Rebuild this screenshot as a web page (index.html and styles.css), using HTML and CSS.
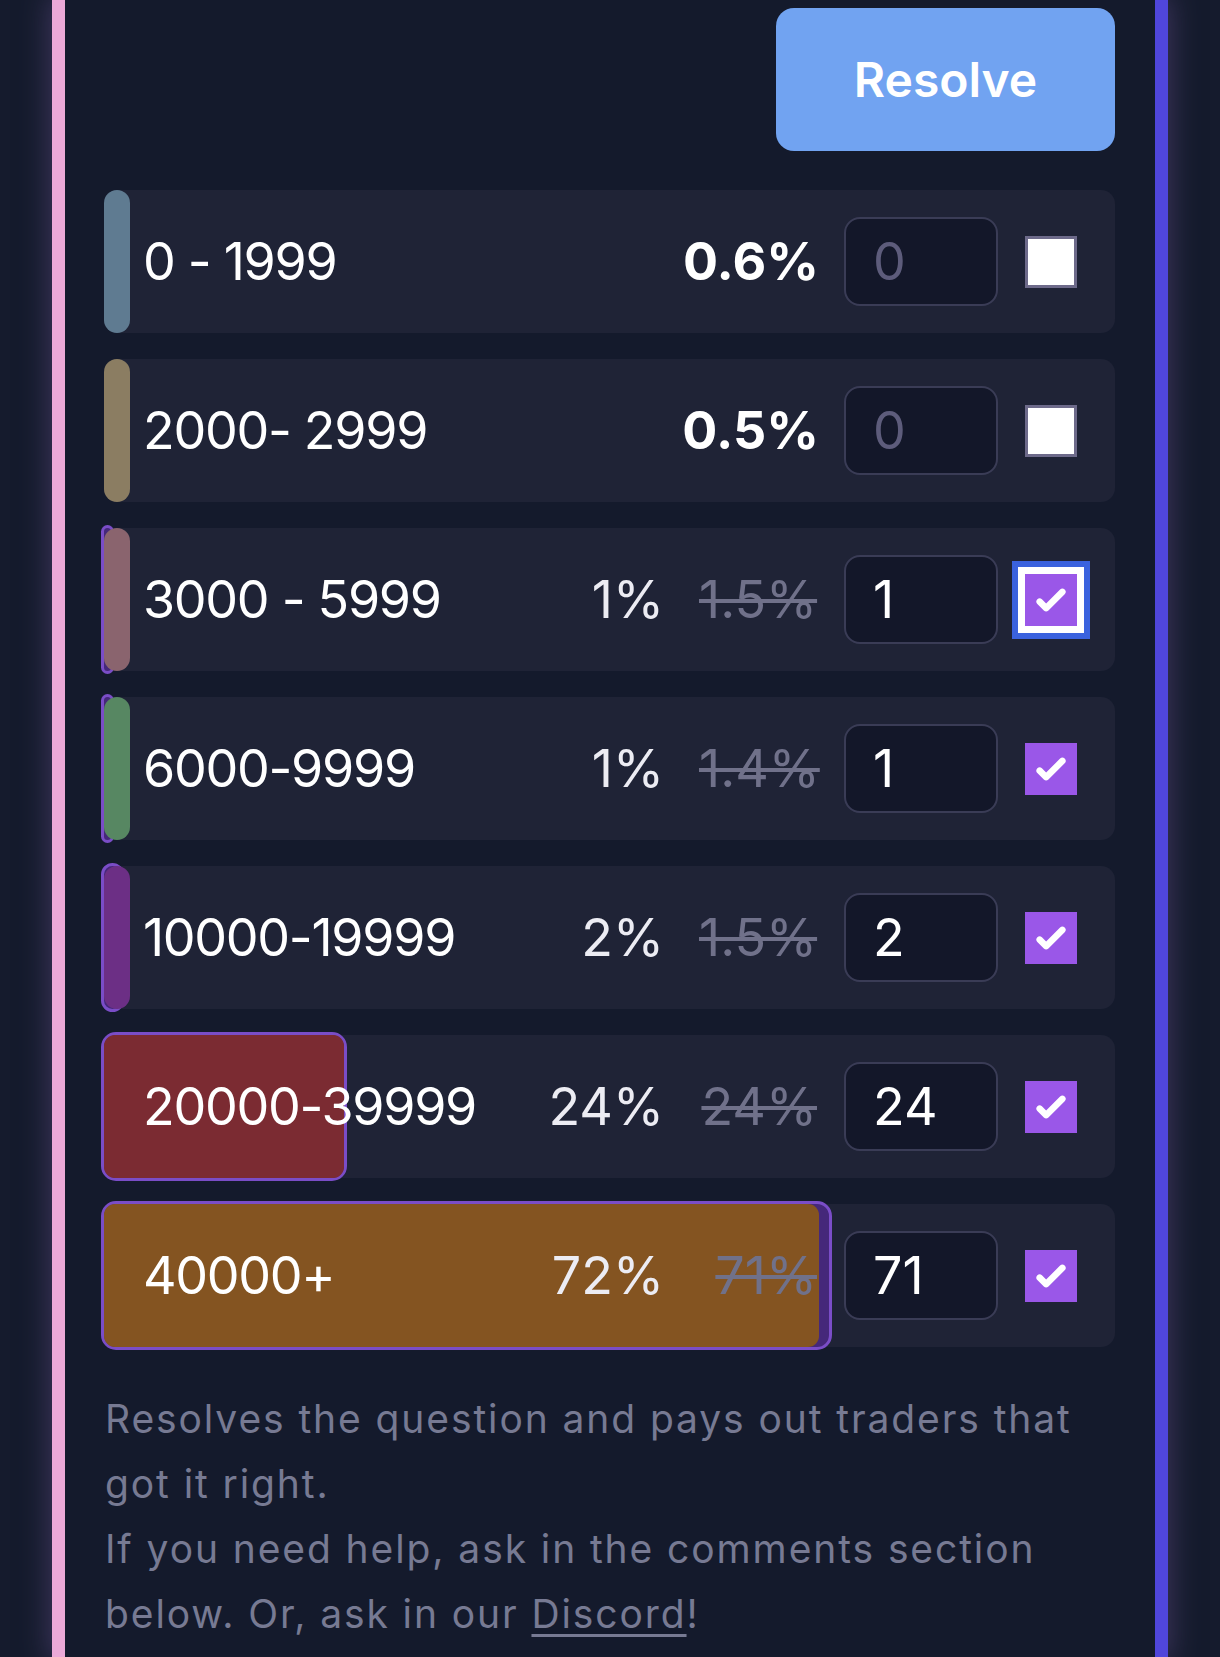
FILE: index.html
```html
<!DOCTYPE html>
<html lang="en">
<head>
<meta charset="utf-8">
<title>Resolve</title>
<link rel="stylesheet" href="styles.css">
</head>
<body>
<main class="panel">
  <div class="actions">
    <button class="resolve" type="button">Resolve</button>
  </div>

  <div class="answers">
    <div class="answer">
      <div class="fill c1" style="width:0.6%"></div>
      <span class="label">0 - 1999</span>
      <span class="probs"><span class="prob strong">0.6%</span></span>
      <input class="amount" type="text" placeholder="0">
      <span class="check"></span>
    </div>

    <div class="answer">
      <div class="fill c2" style="width:0.5%"></div>
      <span class="label">2000- 2999</span>
      <span class="probs"><span class="prob strong">0.5%</span></span>
      <input class="amount" type="text" placeholder="0">
      <span class="check"></span>
    </div>

    <div class="answer">
      <div class="ring" style="width:calc(1% + 3px)"></div>
      <div class="fill c3" style="width:calc(1.5% - 3px)"></div>
      <span class="label">3000 - 5999</span>
      <span class="probs"><span class="prob">1%</span><span class="old">1.5%</span></span>
      <input class="amount" type="text" value="1">
      <span class="check on focus"><svg viewBox="0 0 16 16"><path d="M12.207 4.793a1 1 0 010 1.414l-5 5a1 1 0 01-1.414 0l-2-2a1 1 0 011.414-1.414L6.5 9.086l4.293-4.293a1 1 0 011.414 0z"/></svg></span>
    </div>

    <div class="answer">
      <div class="ring" style="width:calc(1% + 3px)"></div>
      <div class="fill c4" style="width:calc(1.4% - 3px)"></div>
      <span class="label">6000-9999</span>
      <span class="probs"><span class="prob">1%</span><span class="old">1.4%</span></span>
      <input class="amount" type="text" value="1">
      <span class="check on"><svg viewBox="0 0 16 16"><path d="M12.207 4.793a1 1 0 010 1.414l-5 5a1 1 0 01-1.414 0l-2-2a1 1 0 011.414-1.414L6.5 9.086l4.293-4.293a1 1 0 011.414 0z"/></svg></span>
    </div>

    <div class="answer">
      <div class="ring" style="width:calc(2% + 3px)"></div>
      <div class="fill c5" style="width:calc(1.5% - 3px)"></div>
      <span class="label">10000-19999</span>
      <span class="probs"><span class="prob">2%</span><span class="old">1.5%</span></span>
      <input class="amount" type="text" value="2">
      <span class="check on"><svg viewBox="0 0 16 16"><path d="M12.207 4.793a1 1 0 010 1.414l-5 5a1 1 0 01-1.414 0l-2-2a1 1 0 011.414-1.414L6.5 9.086l4.293-4.293a1 1 0 011.414 0z"/></svg></span>
    </div>

    <div class="answer">
      <div class="ring" style="width:calc(24% + 3px)"></div>
      <div class="fill wide c6" style="width:calc(24% - 3px)"></div>
      <span class="label">20000-39999</span>
      <span class="probs"><span class="prob">24%</span><span class="old">24%</span></span>
      <input class="amount" type="text" value="24">
      <span class="check on"><svg viewBox="0 0 16 16"><path d="M12.207 4.793a1 1 0 010 1.414l-5 5a1 1 0 01-1.414 0l-2-2a1 1 0 011.414-1.414L6.5 9.086l4.293-4.293a1 1 0 011.414 0z"/></svg></span>
    </div>

    <div class="answer">
      <div class="ring" style="width:calc(72% + 3px)"></div>
      <div class="fill wide c7" style="width:calc(71% - 3px)"></div>
      <span class="label">40000+</span>
      <span class="probs"><span class="prob">72%</span><span class="old">71%</span></span>
      <input class="amount" type="text" value="71">
      <span class="check on"><svg viewBox="0 0 16 16"><path d="M12.207 4.793a1 1 0 010 1.414l-5 5a1 1 0 01-1.414 0l-2-2a1 1 0 011.414-1.414L6.5 9.086l4.293-4.293a1 1 0 011.414 0z"/></svg></span>
    </div>
  </div>

  <p class="help">Resolves the question and pays out traders that got it right.<br>If you need help, ask in the comments section below. Or, ask in our <a href="#">Discord</a>!</p>
</main>
</body>
</html>
```

FILE: styles.css
```css
html, body {
  margin: 0;
  padding: 0;
  background: #151b2d;
}

body {
  font-family: Inter, "Noto Sans", sans-serif;
  overflow: hidden;
  height: 1657px;
}

.panel {
  box-sizing: border-box;
  margin-left: 52px;
  width: 1116px;
  min-height: 1657px;
  padding: 8px 40px 0 39px;
  background: #141a2c;
  border-left: 13px solid #eba9d7;
  border-right: 13px solid #5046db;
  box-shadow: 0 0 26px 3px rgba(92, 74, 130, 0.55);
}

.actions {
  display: flex;
  justify-content: flex-end;
}

.resolve {
  width: 339px;
  height: 143px;
  border: 0;
  border-radius: 18px;
  background: #71a3f1;
  color: #ffffff;
  font-family: Inter, sans-serif;
  font-weight: 600;
  font-size: 48px;
}

.answers {
  margin-top: 39px;
  display: flex;
  flex-direction: column;
  gap: 26px;
}

.answer {
  position: relative;
  height: 143px;
  display: flex;
  align-items: center;
  gap: 27px;
  padding: 0 38px 0 39px;
  background: #1f2336;
  border-radius: 14px;
  font-size: 52px;
  color: #ffffff;
}

.fill {
  position: absolute;
  left: 0;
  top: 0;
  bottom: 0;
  min-width: 26px;
  border-radius: 13px;
  z-index: 1;
}

.fill.wide {
  border-radius: 11px;
}

.ring {
  position: absolute;
  box-sizing: border-box;
  left: -3px;
  top: -3px;
  bottom: -3px;
  border: 3px solid #7a4dc7;
  background: #45287a;
  border-radius: 15px;
  z-index: 0;
}

.c1 { background: #5f7b91; }
.c2 { background: #8b7d62; }
.c3 { background: #8a646e; }
.c4 { background: #578762; }
.c5 { background: #6c2f85; }
.c6 { background: #7b2b32; }
.c7 { background: #845421; }

.label {
  position: relative;
  z-index: 2;
  flex: 1;
  white-space: nowrap;
  letter-spacing: -1.3px;
}

.probs {
  position: relative;
  z-index: 2;
  display: flex;
  align-items: baseline;
  white-space: nowrap;
}

.prob {
  color: #ececf3;
  margin-right: -4px;
}

.prob.strong {
  color: #ffffff;
  font-weight: 700;
  margin-right: -2px;
}

.old {
  width: 118px;
  margin-left: 39px;
  text-align: right;
  color: #70718a;
  text-decoration: line-through;
  text-decoration-thickness: 4px;
}

.amount {
  position: relative;
  z-index: 2;
  box-sizing: border-box;
  width: 154px;
  height: 89px;
  flex: none;
  margin: 0;
  padding: 0 0 0 27px;
  border: 2px solid #3a3c56;
  border-radius: 16px;
  background: #131729;
  color: #ffffff;
  font-family: Inter, sans-serif;
  font-size: 52px;
  outline: none;
}

.amount::placeholder {
  color: #5d5c7b;
}

.check {
  position: relative;
  z-index: 2;
  box-sizing: border-box;
  flex: none;
  width: 52px;
  height: 52px;
  background: #ffffff;
  border: 3px solid #6d6a8a;
  display: flex;
  align-items: center;
  justify-content: center;
}

.check.on {
  background: #9a57e8;
  border: 0;
}

.check svg {
  width: 52px;
  height: 52px;
  fill: #ffffff;
}

.check.focus {
  box-shadow: 0 0 0 7px #ffffff, 0 0 0 13px #3a62de;
}

.help {
  max-width: 1000px;
  margin: 39px 0 0 1px;
  font-size: 39px;
  line-height: 65px;
  letter-spacing: 1.9px;
  color: #777a93;
}

.help a {
  color: #777a93;
  text-decoration: underline;
  text-decoration-thickness: 3px;
  text-underline-offset: 6px;
}
```
